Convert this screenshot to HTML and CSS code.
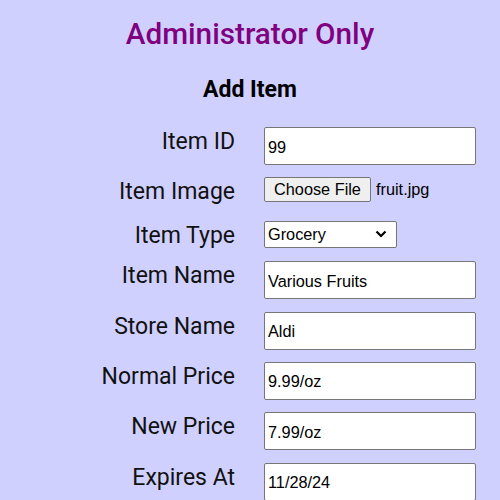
FILE: index.html
```html
<!DOCTYPE html>
<html>
<head>
<meta charset="utf-8">
<link rel="stylesheet" href="styles.css">
</head>
<body>
<header class="head">
  <h1 class="title">Administrator Only</h1>
  <h2 class="subtitle">Add Item</h2>
</header>
<form class="form">
  <label class="lbl">Item ID</label>
  <div class="field"><input class="txt" type="text" value="99"></div>

  <label class="lbl">Item Image</label>
  <div class="field file-field"><button type="button" class="file-btn">Choose File</button><span class="file-name">fruit.jpg</span></div>

  <label class="lbl">Item Type</label>
  <div class="field sel-field"><select class="sel"><option>Grocery</option><option>Household</option></select></div>

  <label class="lbl">Item Name</label>
  <div class="field"><input class="txt" type="text" value="Various Fruits"></div>

  <label class="lbl">Store Name</label>
  <div class="field"><input class="txt" type="text" value="Aldi"></div>

  <label class="lbl">Normal Price</label>
  <div class="field"><input class="txt" type="text" value="9.99/oz"></div>

  <label class="lbl">New Price</label>
  <div class="field"><input class="txt" type="text" value="7.99/oz"></div>

  <label class="lbl">Expires At</label>
  <div class="field"><input class="txt" type="text" value="11/28/24"></div>
</form>
</body>
</html>
```
FILE: styles.css
```css
html, body {
  margin: 0;
  padding: 0;
  background: #d0d0ff;
  overflow: hidden;
}
body {
  font-family: Roboto, "Liberation Sans", sans-serif;
  color: #000;
}
.head {
  padding-top: 16px;
  text-align: center;
}
.title {
  margin: 0;
  font-size: 29.7px;
  line-height: 35px;
  font-weight: 500;
  color: #800080;
}
.subtitle {
  margin: 26px 0 0;
  font-size: 23px;
  line-height: 26px;
  font-weight: 700;
}
.form {
  margin-top: 24px;
  display: grid;
  grid-template-columns: 227px 212px;
  column-gap: 29px;
  row-gap: 12.4px;
  padding-left: 8px;
}
.lbl {
  text-align: right;
  font-size: 23px;
  line-height: 27px;
  padding-top: 1px;
  color: #111;
}
.field {
  display: flex;
  align-items: flex-start;
}
.txt {
  box-sizing: border-box;
  width: 212px;
  height: 38px;
  margin: 0;
  padding: 2px 3px 0;
  border: 1px solid #767676;
  border-radius: 2px;
  background: #fff;
  font-family: "Liberation Sans", Arial, sans-serif;
  font-size: 16.3px;
  color: #000;
}
.file-field {
  height: 31px;
  align-items: flex-start;
  gap: 5px;
}
.file-btn {
  box-sizing: border-box;
  height: 25px;
  width: 107px;
  margin: 0;
  padding: 0 6px;
  border: 1px solid #767676;
  border-radius: 2px;
  background: #efefef;
  font-family: "Liberation Sans", Arial, sans-serif;
  font-size: 16.3px;
  color: #000;
}
.file-name {
  font-family: "Liberation Sans", Arial, sans-serif;
  font-size: 16.3px;
  line-height: 25px;
  color: #000;
}
.sel-field {
  height: 28px;
}
.sel {
  box-sizing: border-box;
  width: 133px;
  height: 27px;
  margin: 0;
  padding: 0 20px 0 3px;
  border: 1px solid #767676;
  border-radius: 2px;
  -webkit-appearance: none;
  appearance: none;
  background: #fff url("data:image/svg+xml;utf8,<svg xmlns='http://www.w3.org/2000/svg' width='12' height='8' viewBox='0 0 12 8'><path d='M1.5 1.5 L6 6 L10.5 1.5' fill='none' stroke='black' stroke-width='2.2'/></svg>") no-repeat right 9px center;
  font-family: "Liberation Sans", Arial, sans-serif;
  font-size: 16.3px;
  color: #000;
}
```
